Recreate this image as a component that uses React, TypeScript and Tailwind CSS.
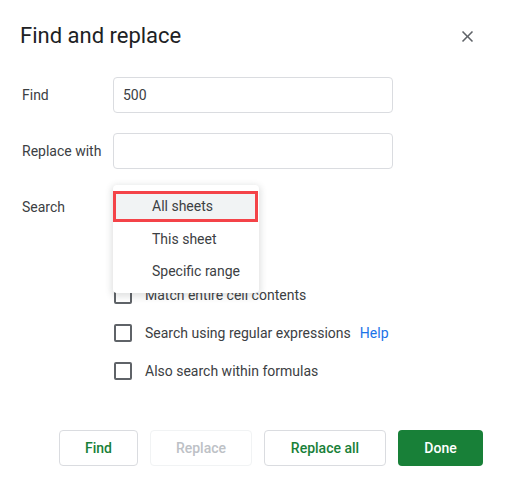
const font = { fontFamily: "Roboto, 'Liberation Sans', sans-serif" };

function Checkbox({ label, help }: { label: string; help?: boolean }) {
  return (
    <div className="flex h-[38px] items-center">
      <div className="ml-[114px] h-[18px] w-[18px] rounded-[2px] border-2 border-[#5f6368]" />
      <span className="ml-[13px] text-[14px] text-[#3c4043]">{label}</span>
      {help && <span className="ml-[9px] text-[14px] text-[#1a73e8]">Help</span>}
    </div>
  );
}

export default function App() {
  return (
    <div className="h-[489px] w-[505px] bg-white" style={font}>
      {/* Header */}
      <div className="flex items-center justify-between pl-[20px] pr-[28px] pt-[22px]">
        <h1 className="text-[22px] leading-[28px] text-[#202124]">Find and replace</h1>
        <svg width="19" height="19" viewBox="0 0 24 24" fill="#5f6368">
          <path d="M19 6.41L17.59 5 12 10.59 6.41 5 5 6.41 10.59 12 5 17.59 6.41 19 12 13.41 17.59 19 19 17.59 13.41 12z" />
        </svg>
      </div>

      {/* Find */}
      <div className="mt-[27px] flex h-[36px] items-center">
        <label className="w-[113px] pl-[22px] text-[14px] text-[#3c4043]">Find</label>
        <div className="flex h-[36px] w-[280px] items-center rounded-[4px] border border-[#dadce0] pl-[9px] text-[14px] text-[#3c4043]">
          500
        </div>
      </div>

      {/* Replace with */}
      <div className="mt-[20px] flex h-[36px] items-center">
        <label className="w-[113px] pl-[22px] text-[14px] text-[#3c4043]">Replace with</label>
        <div className="h-[36px] w-[280px] rounded-[4px] border border-[#dadce0]" />
      </div>

      {/* Search */}
      <div className="relative mt-[20px] flex h-[36px] items-center">
        <label className="w-[113px] pl-[22px] text-[14px] text-[#3c4043]">Search</label>
        <div className="absolute left-[113px] top-[-4px] z-10 w-[146px] rounded-[4px] bg-white pb-[6px] pt-[6px] shadow-[0_2px_6px_2px_rgba(60,64,67,0.15)]">
          <div className="mr-[1px] flex h-[31px] items-center border-[3px] border-[#f44348] bg-[#f1f3f4] pl-[36px] text-[14px] text-[#3c4043]">
            All sheets
          </div>
          <div className="mt-[1px] flex h-[32px] items-center pl-[39px] text-[14px] text-[#3c4043]">This sheet</div>
          <div className="flex h-[32px] items-center pl-[39px] text-[14px] text-[#3c4043]">Specific range</div>
        </div>
      </div>

      {/* Options */}
      <div className="mt-[51px]">
        <Checkbox label="Match entire cell contents" />
        <Checkbox label="Search using regular expressions" help />
        <Checkbox label="Also search within formulas" />
      </div>

      {/* Buttons */}
      <div className="mt-[40px] flex justify-end gap-[12px] pr-[22px]">
        <button className="h-[36px] w-[79px] rounded-[4px] border border-[#dadce0] text-[14px] font-medium text-[#188038]">
          Find
        </button>
        <button className="h-[36px] w-[102px] rounded-[4px] border border-[#f1f3f4] text-[14px] font-medium text-[#bdc1c6]">
          Replace
        </button>
        <button className="h-[36px] w-[122px] rounded-[4px] border border-[#dadce0] text-[14px] font-medium text-[#188038]">
          Replace all
        </button>
        <button className="h-[36px] w-[85px] rounded-[4px] bg-[#188038] text-[14px] font-medium text-white">
          Done
        </button>
      </div>
    </div>
  );
}
